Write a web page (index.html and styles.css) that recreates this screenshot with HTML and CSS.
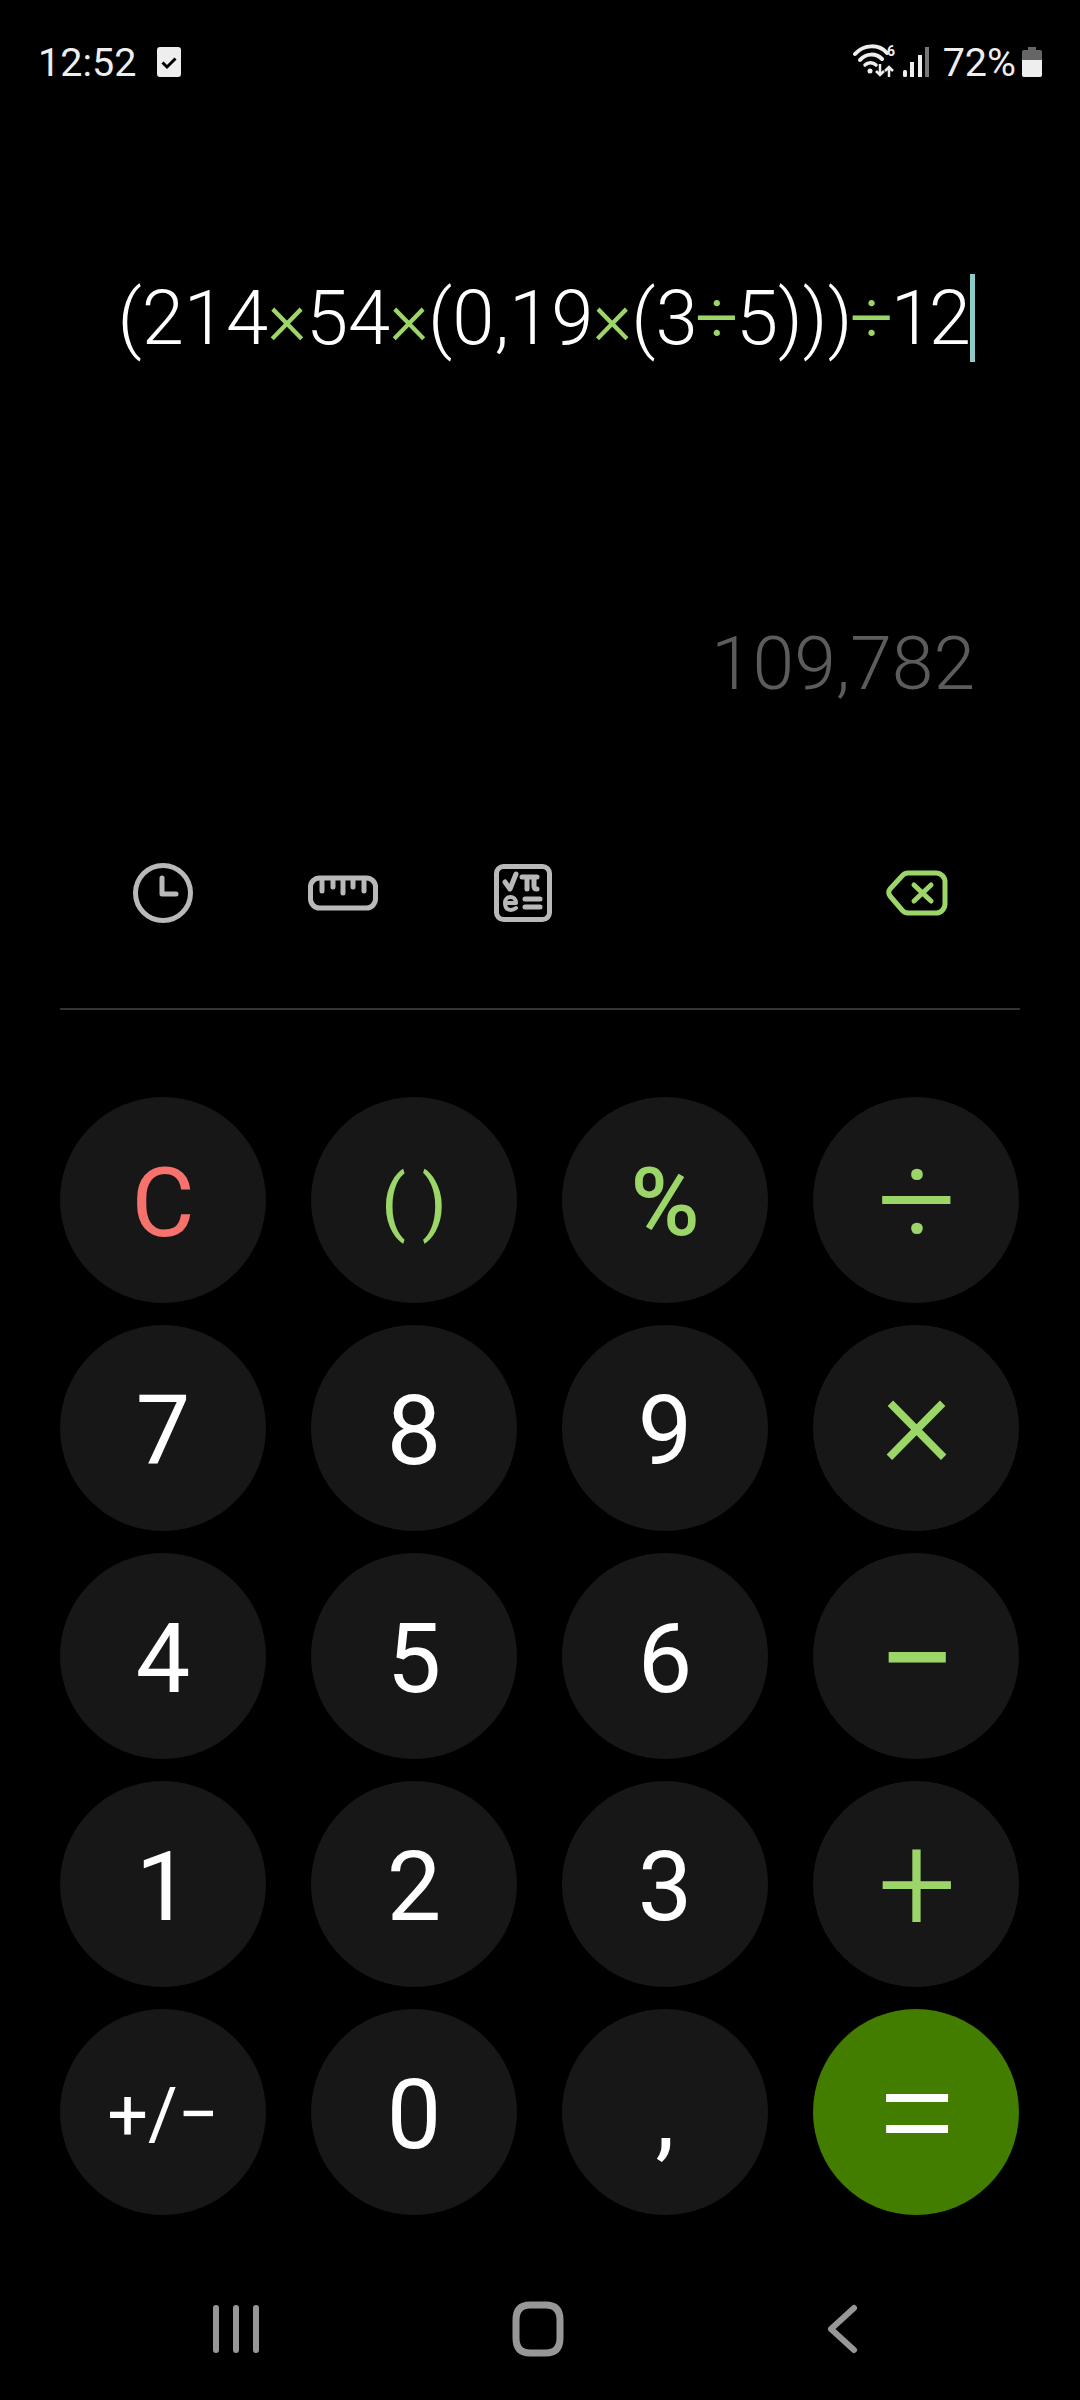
FILE: index.html
```html
<!DOCTYPE html>
<html lang="en">
<head>
    <meta charset="UTF-8">
    <meta name="viewport" content="width=device-width, initial-scale=1.0">
    <title>Calculator</title>
    <link rel="stylesheet" href="styles.css">
</head>
<body>

    <header class="status-bar">
        <div class="status-left">
            <span class="clock">12:52</span>
            <svg class="todo-icon" width="24" height="30" viewBox="0 0 24 30">
                <rect width="24" height="30" rx="3" fill="#eee"/>
                <path d="M5.5 15.5l4.500 4.500 8.500-8.500" fill="none" stroke="#000" stroke-width="3"/>
            </svg>
        </div>
        <div class="status-right">
            <svg class="wifi-icon" width="44" height="38" viewBox="0 0 44 38">
                <path d="M2 12C11 2 26 2 34 11M7 18C13 11 23 11 29 17" fill="none" stroke="#eee" stroke-width="4" stroke-linecap="round"/>
                <path d="M12 23C15 20 20 20 23 23" fill="none" stroke="#eee" stroke-width="3.500" stroke-linecap="round"/>
                <circle cx="17" cy="29" r="2.500" fill="#eee"/>
                <path d="M27 22v11m-4-4l4 4 4-4M36 35v-10m-4 4l4-4 4 4" fill="none" stroke="#eee" stroke-width="2.500"/>
                <text x="34" y="14" class="wifi-six">6</text>
            </svg>
            <svg class="signal-icon" width="28" height="32" viewBox="0 0 28 32">
                <rect x="1" y="24" width="4" height="7" rx="1.500" fill="#eee"/>
                <rect x="8" y="16" width="4" height="15" fill="#eee"/>
                <rect x="16" y="9" width="4" height="22" fill="#eee"/>
                <rect x="23" y="1" width="4" height="30" fill="#777"/>
            </svg>
            <span class="battery-text">72%</span>
            <svg class="battery-icon" width="20" height="30" viewBox="0 0 20 30">
                <path d="M6 0h8v3h4a2 2 0 0 1 2 2v9H0V5a2 2 0 0 1 2-2h4z" fill="#666"/>
                <path d="M0 13h20v15a2 2 0 0 1-2 2H2a2 2 0 0 1-2-2z" fill="#eee"/>
            </svg>
        </div>
    </header>

    <section class="display">
        <div class="expression">
            <span>(214<i>×</i>54<i>×</i>(0,19<i>×</i>(3<i class="div">÷</i>5)))<i class="div">÷</i><span class="tight">1</span>2</span><b class="cursor"></b>
        </div>
        <div class="result">109,782</div>
    </section>

    <section class="toolbar">
        <div class="tool">
            <svg width="60" height="60" viewBox="0 0 60 60" class="tool-svg">
                <circle cx="30" cy="30" r="27.500"/>
                <path d="M29 15v16h14"/>
            </svg>
        </div>
        <div class="tool">
            <svg width="70" height="36" viewBox="0 0 70 36" class="tool-svg">
                <rect x="2.500" y="3" width="65" height="30" rx="9"/>
                <path d="M14 4v12M25 4v8M35 4v14M45 4v8M56 4v12"/>
            </svg>
        </div>
        <div class="tool">
            <svg width="58" height="58" viewBox="0 0 58 58" class="tool-svg">
                <rect x="2.500" y="2.500" width="53" height="53" rx="7"/>
                <path d="M11 18l5 7 6-15"/>
                <path d="M28 13h15M33 13v12M40 13v9q0 3 3 3"/>
                <path d="M31 35h15M31 43h15"/>
                <path d="M11 39h11c0-8-11-8-11 0s7 8 11 5" class="tool-thin"/>
            </svg>
        </div>
        <div class="tool tool-back">
            <svg width="62" height="46" viewBox="0 0 62 46" class="tool-svg tool-green">
                <path d="M22 3h28a9 9 0 0 1 9 9v22a9 9 0 0 1-9 9H22a8 8 0 0 1-6-3L4 26a6 6 0 0 1 0-7L16 6a8 8 0 0 1 6-3z"/>
                <path d="M28 15l17 16M45 15L28 31"/>
            </svg>
        </div>
    </section>

    <div class="divider"></div>

    <section class="keypad">
        <button class="key red">C</button>
        <button class="key green paren">( )</button>
        <button class="key green percent">%</button>
        <button class="key green op">÷</button>

        <button class="key">7</button>
        <button class="key">8</button>
        <button class="key">9</button>
        <button class="key green op op-times">×</button>

        <button class="key">4</button>
        <button class="key">5</button>
        <button class="key">6</button>
        <button class="key green op op-minus">−</button>

        <button class="key">1</button>
        <button class="key">2</button>
        <button class="key">3</button>
        <button class="key green op">+</button>

        <button class="key sign">+/−</button>
        <button class="key">0</button>
        <button class="key">,</button>
        <button class="key equals op">=</button>
    </section>

    <footer class="nav-bar">
        <svg width="60" height="54" viewBox="0 0 60 54" class="nav-svg">
            <path d="M10 6v42M30 6v42M50 6v42"/>
        </svg>
        <svg width="60" height="56" viewBox="0 0 60 56" class="nav-svg nav-home">
            <path d="M22 4h16q14 0 14 15v18q0 15-14 15H22Q8 52 8 37V19Q8 4 22 4z"/>
        </svg>
        <svg width="60" height="54" viewBox="0 0 60 54" class="nav-svg">
            <path d="M44 6L21 27l23 21"/>
        </svg>
    </footer>

</body>
</html>
```

FILE: styles.css
```css
* {
    margin: 0;
    padding: 0;
    box-sizing: border-box;
    font-family: 'Roboto', sans-serif;
}

body {
    width: 1080px;
    height: 2400px;
    background-color: #000;
    color: white;
    overflow: hidden;
}

.status-bar {
    height: 120px;
    display: flex;
    justify-content: space-between;
    align-items: center;
    padding: 4px 38px 0 38px;
    color: #eee;
    font-size: 39.5px;
}

.status-left, .status-right {
    display: flex;
    align-items: center;
}

.todo-icon {
    margin-left: 21px;
}

.wifi-icon {
    margin-top: -2px;
}

.wifi-six {
    font-size: 14px;
    font-weight: 700;
    fill: #eee;
}

.signal-icon {
    margin-left: 5px;
}

.battery-text {
    margin-left: 13px;
}

.battery-icon {
    margin-left: 6px;
}

.display {
    padding-right: 105px;
}

.expression {
    margin-top: 148px;
    height: 100px;
    display: flex;
    justify-content: flex-end;
    align-items: center;
    font-size: 76px;
    font-weight: 300;
    white-space: nowrap;
}

.expression i {
    font-style: normal;
    color: #9cd568;
    margin: 0 -1px;
}

.expression .div {
    margin: 0 -2.5px;
}

.tight {
    letter-spacing: -4px;
}

.cursor {
    width: 5px;
    height: 88px;
    margin-left: -1px;
    background: #8ccbc8;
}

.result {
    margin-top: 250px;
    height: 90px;
    line-height: 90px;
    text-align: right;
    font-size: 75px;
    font-weight: 300;
    color: #5c5c5c;
}

.toolbar {
    margin-top: 145px;
    height: 80px;
    display: flex;
    align-items: center;
    padding: 0 103px 0 103px;
}

.tool {
    width: 120px;
    margin-right: 60px;
    display: flex;
    justify-content: center;
}

.tool-back {
    margin: 0 0 0 auto;
}

.tool-svg {
    fill: none;
    stroke: #b9b9b9;
    stroke-width: 5;
    stroke-linecap: round;
    stroke-linejoin: round;
}

.tool-green {
    stroke: #9cd568;
}

.tool-thin {
    stroke-width: 4;
}

.divider {
    height: 2px;
    margin: 75px 60px 0 60px;
    background: #333;
}

.keypad {
    margin-top: 87px;
    padding: 0 60px;
    display: grid;
    grid-template-columns: repeat(4, 206px);
    grid-auto-rows: 206px;
    column-gap: 45px;
    row-gap: 22px;
}

.key {
    border: none;
    border-radius: 50%;
    background: #171717;
    color: #fff;
    font-size: 97px;
    font-weight: 400;
    padding-top: 5px;
    display: flex;
    align-items: center;
    justify-content: center;
}

.red {
    color: #f7716d;
}

.green {
    color: #9cd568;
}

.paren {
    font-weight: 400;
    font-size: 72px;
    word-spacing: -2px;
}

.percent {
    font-size: 94px;
    font-weight: 500;
}

.op {
    font-size: 140px;
    font-weight: 300;
    padding-top: 0;
    padding-left: 2px;
}

.op-times {
    padding-bottom: 18px;
    font-weight: 350;
}

.op-minus {
    font-weight: 400;
    padding-top: 6px;
}

.sign {
    font-size: 72px;
}

.equals {
    background: #437d00;
    color: #fff;
    font-size: 152px;
}

.nav-bar {
    margin-top: 86px;
    display: flex;
    justify-content: space-between;
    align-items: center;
    padding: 0 210px 0 206px;
}

.nav-svg {
    fill: none;
    stroke: #979797;
    stroke-width: 6;
    stroke-linecap: round;
    stroke-linejoin: round;
}

.nav-home {
    stroke-width: 7;
}
```
